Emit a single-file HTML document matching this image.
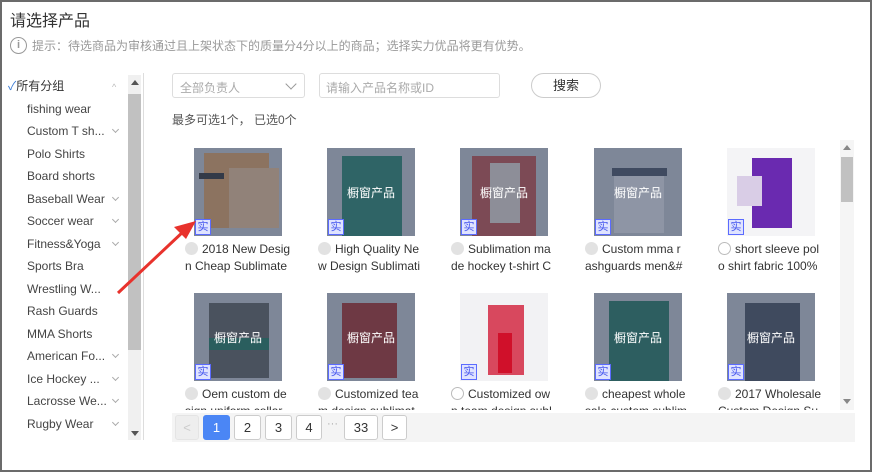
<!DOCTYPE html>
<html><head><meta charset="utf-8"><style>
*{box-sizing:border-box;margin:0;padding:0}
body{width:872px;height:472px;overflow:hidden;background:#fff;font-family:"Liberation Sans","Noto Sans CJK SC",sans-serif;color:#333;position:relative}
.frame{position:absolute;left:0;top:0;width:872px;height:472px;border:2px solid #6b6b6b}
.abs{position:absolute}
.title{left:10px;top:7px;font-size:16px;color:#333}
.tip{left:10px;top:37px;font-size:12px;color:#999;display:flex;align-items:center}
.tip i{width:17px;height:17px;border:1.5px solid #999;border-radius:50%;font-style:normal;font-size:11px;text-align:center;line-height:14px;margin-right:5px;color:#999;font-weight:bold}
.list{left:0;top:75px;width:128px;height:365px;overflow:hidden;font-size:12px}
.list div{height:22.5px;line-height:22.5px;padding-left:27px;position:relative;color:#444}
.list div.ch:after{content:"";position:absolute;left:113px;top:7px;width:4px;height:4px;border-right:1px solid #aaa;border-bottom:1px solid #aaa;transform:rotate(45deg)}
.sb{left:128px;top:75px;width:13px;height:365px;background:#f0f0f0}
.thumb{left:128px;top:94px;width:13px;height:256px;background:#c1c1c1}
.vline{left:143px;top:73px;width:1px;height:367px;background:#ddd}
.sel{left:172px;top:73px;width:133px;height:25px;border:1px solid #ddd;border-radius:3px;font-size:12px;color:#aaa;padding:5px 7px}
.sel:after{content:"";position:absolute;right:9px;top:6px;width:7px;height:7px;border-right:1px solid #999;border-bottom:1px solid #999;transform:rotate(45deg)}
.inp{left:319px;top:73px;width:181px;height:25px;border:1px solid #ddd;border-radius:3px;font-size:12px;color:#aaa;padding:5px 6px}
.btn{left:531px;top:73px;width:70px;height:25px;border:1px solid #ccc;border-radius:13px;font-size:13px;text-align:center;line-height:23px;color:#333}
.cnt{left:172px;top:111px;font-size:12px;color:#555}
.grid{left:160px;top:140px;width:695px;height:270px;overflow:hidden}
.gsb{left:840px;top:140px;width:14px;height:270px;background:#f5f5f5}
.gth{left:841px;top:157px;width:12px;height:45px;background:#c1c1c1}
.card{position:absolute;width:110px}
.img{position:absolute;left:9px;top:0;width:88px;height:88px;background:#7e8798;overflow:hidden}
.img .b{position:absolute}
.img .lbl{position:absolute;left:0;right:0;top:36px;text-align:center;color:#fff;font-size:12px}
.badge{position:absolute;left:10px;top:71px;width:16px;height:16px;border:1px solid #5b6bff;background:#dfe3ff;color:#4455ee;font-size:11px;line-height:14px;text-align:center}
.cap{position:absolute;left:0;top:93px;width:112px;font-size:12px;line-height:17px;color:#333;white-space:nowrap}
.rd{display:inline-block;width:13px;height:13px;border-radius:50%;background:#e2e2e2;vertical-align:-2px;margin-right:4px}
.rd.w{background:#fff;border:1px solid #bbb}
.pg{left:172px;top:413px;width:683px;height:29px;background:#f4f4f4}
.pb{position:absolute;top:415px;height:25px;border:1px solid #ccc;border-radius:3px;background:#fff;font-size:13px;text-align:center;line-height:23px;color:#333}
</style></head><body>
<div class="abs title">请选择产品</div>
<div class="abs tip"><i>i</i>提示：待选商品为审核通过且上架状态下的质量分4分以上的商品；选择实力优品将更有优势。</div>
<div class="abs list">
<div style="padding-left:8px;color:#333"><span style="color:#3a7bd5">✓</span>所有分组</div>
<div>fishing wear</div><div class="ch">Custom T sh...</div><div>Polo Shirts</div><div>Board shorts</div>
<div class="ch">Baseball Wear</div><div class="ch">Soccer wear</div><div class="ch">Fitness&amp;Yoga</div><div>Sports Bra</div>
<div>Wrestling W...</div><div>Rash Guards</div><div>MMA Shorts</div><div class="ch">American Fo...</div><div class="ch">Ice Hockey ...</div>
<div class="ch">Lacrosse We...</div><div class="ch">Rugby Wear</div><div>Basketball...</div>
</div>
<div class="abs" style="left:112px;top:82px;font-size:9px;color:#bbb">^</div>
<div class="abs sb"></div><div class="abs thumb"></div>
<div class="abs" style="left:131px;top:80px;width:0;height:0;border:4px solid transparent;border-bottom:5px solid #555;border-top:0"></div>
<div class="abs" style="left:131px;top:431px;width:0;height:0;border:4px solid transparent;border-top:5px solid #555;border-bottom:0"></div>
<div class="abs vline"></div>
<div class="abs sel">全部负责人</div>
<div class="abs inp">请输入产品名称或ID</div>
<div class="abs btn">搜索</div>
<div class="abs cnt">最多可选1个， 已选0个</div>
<div class="abs grid">
<div class="card" style="left:25px;top:8px"><div class="img"><div class="b" style="left:10px;top:5px;width:65px;height:75px;background:#8c7360"></div><div class="b" style="left:35px;top:20px;width:50px;height:60px;background:#918279"></div><div class="b" style="left:5px;top:25px;width:25px;height:6px;background:#333a48"></div></div><div class="badge">实</div><div class="cap"><span class="rd"></span>2018 New Desig<br>n Cheap Sublimate</div></div>
<div class="card" style="left:158px;top:8px"><div class="img"><div class="b" style="left:15px;top:8px;width:60px;height:80px;background:#2f6466"></div><div class="lbl">橱窗产品</div></div><div class="badge">实</div><div class="cap"><span class="rd"></span>High Quality Ne<br>w Design Sublimati</div></div>
<div class="card" style="left:291px;top:8px"><div class="img"><div class="b" style="left:12px;top:8px;width:64px;height:80px;background:#7c4a55"></div><div class="b" style="left:30px;top:15px;width:30px;height:60px;background:#8d8e98"></div><div class="lbl">橱窗产品</div></div><div class="badge">实</div><div class="cap"><span class="rd"></span>Sublimation ma<br>de hockey t-shirt C</div></div>
<div class="card" style="left:425px;top:8px"><div class="img"><div class="b" style="left:20px;top:25px;width:50px;height:60px;background:#8e95a5"></div><div class="b" style="left:18px;top:20px;width:55px;height:8px;background:#3f4a60"></div><div class="lbl">橱窗产品</div></div><div class="badge">实</div><div class="cap"><span class="rd"></span>Custom mma r<br>ashguards men&amp;#</div></div>
<div class="card" style="left:558px;top:8px"><div class="img" style="background:#f4f4f6"><div class="b" style="left:25px;top:10px;width:40px;height:70px;background:#6a2ab0"></div><div class="b" style="left:10px;top:28px;width:25px;height:30px;background:#d9cde6"></div></div><div class="badge">实</div><div class="cap"><span class="rd w"></span>short sleeve pol<br>o shirt fabric 100%</div></div>
<div class="card" style="left:25px;top:153px"><div class="img"><div class="b" style="left:15px;top:10px;width:60px;height:75px;background:#4a525e"></div><div class="b" style="left:15px;top:45px;width:60px;height:12px;background:#2a5e5e"></div><div class="lbl">橱窗产品</div></div><div class="badge">实</div><div class="cap"><span class="rd"></span>Oem custom de<br>sign uniform collar</div></div>
<div class="card" style="left:158px;top:153px"><div class="img"><div class="b" style="left:15px;top:10px;width:55px;height:75px;background:#6e3944"></div><div class="lbl">橱窗产品</div></div><div class="badge">实</div><div class="cap"><span class="rd"></span>Customized tea<br>m design sublimat</div></div>
<div class="card" style="left:291px;top:153px"><div class="img" style="background:#f2f2f4"><div class="b" style="left:28px;top:12px;width:36px;height:70px;background:#d8485e"></div><div class="b" style="left:38px;top:40px;width:14px;height:40px;background:#d0102a"></div></div><div class="badge">实</div><div class="cap"><span class="rd w"></span>Customized ow<br>n team design subl</div></div>
<div class="card" style="left:425px;top:153px"><div class="img"><div class="b" style="left:15px;top:8px;width:60px;height:80px;background:#2d5e60"></div><div class="lbl">橱窗产品</div></div><div class="badge">实</div><div class="cap"><span class="rd"></span>cheapest whole<br>sale custom sublim</div></div>
<div class="card" style="left:558px;top:153px"><div class="img"><div class="b" style="left:18px;top:10px;width:55px;height:78px;background:#3f4a5e"></div><div class="lbl">橱窗产品</div></div><div class="badge">实</div><div class="cap"><span class="rd"></span>2017 Wholesale<br>Custom Design Su</div></div>
</div>
<div class="abs gsb"></div><div class="abs gth"></div>
<div class="abs" style="left:843px;top:145px;border:4px solid transparent;border-bottom:5px solid #888;border-top:0"></div>
<div class="abs" style="left:843px;top:399px;border:4px solid transparent;border-top:5px solid #888;border-bottom:0"></div>
<div class="abs pg"></div>
<div class="pb" style="left:175px;width:24px;border-color:#e4e4e4;background:#eee;color:#ccc">&lt;</div>
<div class="pb" style="left:203px;width:27px;background:#4b86f5;border-color:#4b86f5;color:#fff">1</div>
<div class="pb" style="left:234px;width:27px">2</div>
<div class="pb" style="left:265px;width:27px">3</div>
<div class="pb" style="left:296px;width:26px">4</div>
<div class="abs" style="left:327px;top:418px;font-size:11px;color:#aaa">···</div>
<div class="pb" style="left:344px;width:34px">33</div>
<div class="pb" style="left:382px;width:25px">&gt;</div>
<svg class="abs" style="left:110px;top:215px" width="95" height="85"><line x1="8" y1="78" x2="75" y2="15" stroke="#e8322c" stroke-width="3"/><polygon points="86,6 64,12 76,24" fill="#e8322c"/></svg>
<div class="frame"></div>
</body></html>
